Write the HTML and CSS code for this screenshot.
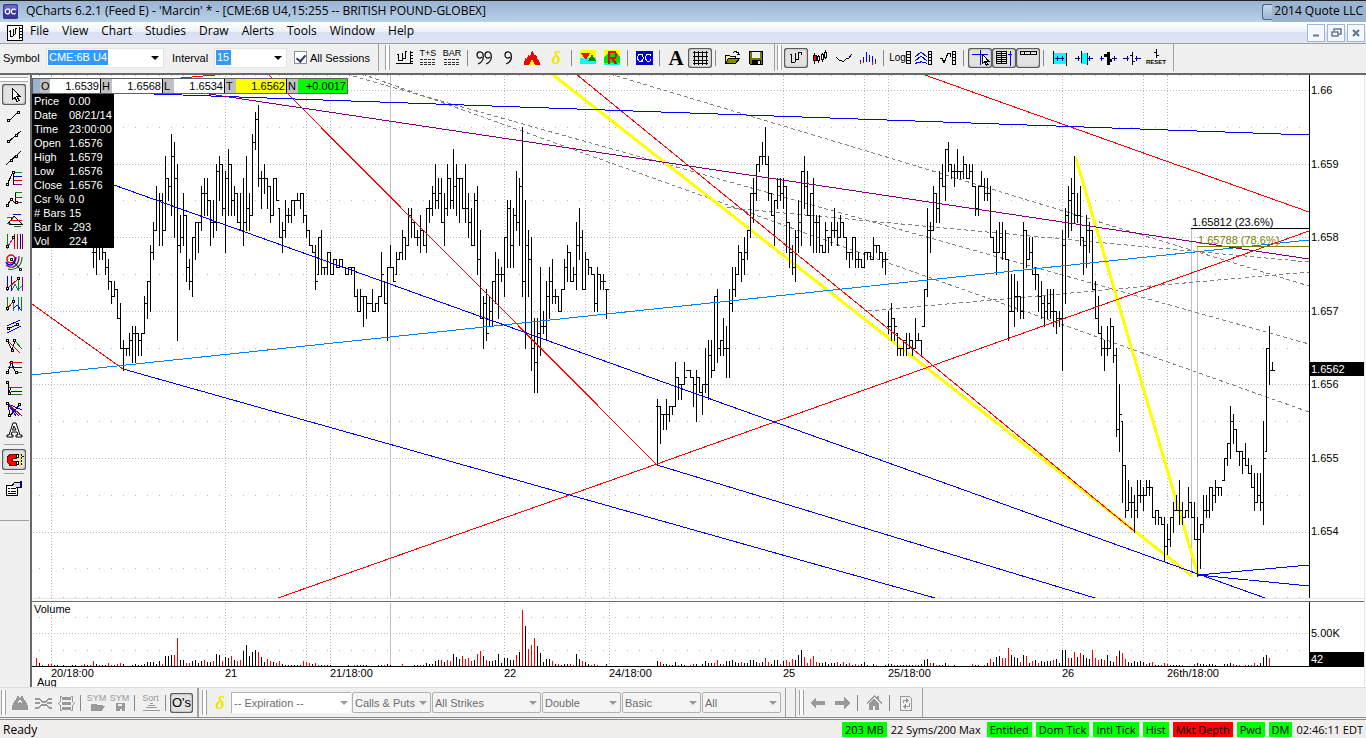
FILE: index.html
```html
<!DOCTYPE html>
<html lang="en">
<head>
<meta charset="utf-8">
<title>QCharts 6.2.1</title>
<link rel="stylesheet" href="styles.css">
</head>
<body>
<header class="titlebar">
  <svg class="applogo" viewBox="0 0 16 16"><rect width="16" height="16" rx="2" fill="#3a3597"/><rect x="1" y="1" width="14" height="6" rx="2" fill="#6a64c4"/><path d="M7 10.5L6 9.500M6.500 5.500H4L2.500 7v2L4 10.500h2l1-1.500V7zM13.500 6.500l-1-1H10.500L9 7v2l1.500 1.500h2l1-1" fill="none" stroke="#fff" stroke-width="1.400"/></svg>
  <h1>QCharts 6.2.1 (Feed E) - 'Marcin' * - [CME:6B U4,15:255 -- BRITISH POUND-GLOBEX]</h1>
  <span class="capbtn"></span>
  <span class="owner">2014 Quote LLC</span>
</header>

<nav class="menubar">
  <svg class="docicon" viewBox="0 0 16 16" shape-rendering="crispEdges"><rect x=".5" y=".5" width="15" height="15" fill="#fff" stroke="#000"/><path d="M3.500 5v7M2 6.500h1M4 11.500h2M6.500 4v7M7 9.500h1M8.500 3v6M9 3.500h1M12.500 2v12M13 3.500h2M13 6.500h2M13 9.500h2M13 12.500h2" stroke="#000" fill="none"/></svg>
  <button>File</button><button>View</button><button>Chart</button><button>Studies</button><button>Draw</button><button>Alerts</button><button>Tools</button><button>Window</button><button>Help</button>
  <span class="wbtns">
    <button aria-label="Minimize"><svg viewBox="0 0 12 12"><path d="M3 8.500h6" stroke="#647a91" stroke-width="2"/></svg></button>
    <button aria-label="Restore"><svg viewBox="0 0 12 12"><path d="M4 4V2h7v5H9M2 5h6v4H2z" fill="none" stroke="#647a91" stroke-width="1.500"/></svg></button>
    <button aria-label="Close"><svg viewBox="0 0 12 12"><path d="M3 3l6 6M9 3l-6 6" stroke="#647a91" stroke-width="2.200"/></svg></button>
  </span>
</nav>

<div class="toolbar top">
  <form class="fields">
    <label class="lsym" for="sym">Symbol</label>
    <span class="combo csym"><input id="sym" value="CME:6B U4"><button type="button" aria-label="Symbols"></button></span>
    <label class="lint" for="int">Interval</label>
    <span class="combo cint"><input id="int" value="15"><button type="button" aria-label="Intervals"></button></span>
    <label class="sess"><input type="checkbox" checked>All Sessions</label>
  </form>
  <div class="group g1">
    <i class="grip"></i>
    <button class="tb" aria-label="Chart"><svg viewBox="0 0 24 20"><path d="M6.500 6v7M5 6.500h1M7 12.500h3M10.500 5v8M11 10.500h2M13.500 3v8M14 3.500h1M18.500 3v13M19 4.500h2M19 7.500h2M19 10.500h2M19 13.500h2M4 15.500h17" stroke="#000"/></svg></button>
    <button class="tb lab" aria-label="Time and sales"><b>T+S</b><svg viewBox="0 0 24 8"><path d="M4 1.500h16M4 4.500h16M4 6.500h16" stroke="#333" stroke-dasharray="3 1"/></svg></button>
    <button class="tb lab" aria-label="Bar"><b>BAR</b><svg viewBox="0 0 24 8"><path d="M4 1.500h16M4 4.500h16M4 6.500h16" stroke="#333" stroke-dasharray="3 1"/></svg></button>
    <i class="sep"></i>
    <button class="tb" aria-label="Quotes"><svg class="soft" viewBox="0 0 24 20"><path d="M6 16c5-2 6-6 5-10-1-3-6-3-6 1 0 3 3 4 5 2M14 16c5-2 6-6 5-10-1-3-6-3-6 1 0 3 3 4 5 2" stroke="#111" stroke-width="1.300"/></svg></button>
    <button class="tb" aria-label="Quote"><svg class="soft" viewBox="0 0 24 20"><path d="M10 16c5-2 6-6 5-10-1-3-6-3-6 1 0 3 3 4 5 2" stroke="#111" stroke-width="1.300"/></svg></button>
    <button class="tb" aria-label="Hot list"><svg viewBox="0 0 24 20"><path d="M4 17l1-7 2 2 1-6 2 3 2-7 3 6 1-2 2 6 1-1 1 6z" fill="#e00"/><path d="M9 17l3-6 3 6z" fill="#ff0"/></svg></button>
    <button class="tb delta" aria-label="Options">δ</button>
    <i class="sep"></i>
    <button class="tb" aria-label="Movers"><svg viewBox="0 0 24 20"><path d="M4 2h16v8H4z" fill="#ff0"/><path d="M4 10h16v6H4z" fill="#0ff"/><path d="M5 5h9l-4 7z" fill="#f00"/><path d="M12 13l4-7 4 7z" fill="#080"/></svg></button>
    <button class="tb" aria-label="Ranking"><svg viewBox="0 0 24 20"><path d="M4 2h16v9H4z" fill="#ff0"/><path d="M4 13h16v4H4z" fill="#0ff"/><path d="M4 9l4-4h9l3 4v6H4z" fill="#0d0"/><path d="M8.500 16V4h5.500q2 0 2 3t-2 3H9M12 10l4 6" stroke="#e00" stroke-width="2"/></svg></button>
    <i class="sep"></i>
    <button class="tb" aria-label="QC"><svg viewBox="0 0 24 20"><path d="M4 3h17v14H4z" fill="#00c"/><path d="M9.500 12.500l2 2M10 6.500H7L5.500 9v2L7 13h3l1-2V9zM19 8l-1-1.500h-3L13.500 9v2l1.500 2h3l1-1.500" stroke="#fff"/></svg></button>
    <i class="sep"></i>
    <button class="tb serif" aria-label="Font">A</button>
    <button class="tb on" aria-label="Grid"><svg viewBox="0 0 24 20"><path d="M6.500 3v14M10.500 3v14M14.500 3v14M18.500 3v14M5 4.500h15M5 8.500h15M5 12.500h15M5 15.500h15" stroke="#000"/></svg></button>
    <i class="sep"></i>
    <button class="tb" aria-label="Open"><svg viewBox="0 0 24 20"><path d="M5.500 15.500v-8h4l1 1h5v2" fill="#ff8" stroke="#000"/><path d="M5.500 15.500l3-5h11l-4 5z" fill="#880" stroke="#000"/><path d="M13 4.500l2-1 3 1 1 2M17 6.500h3" stroke="#000"/></svg></button>
    <button class="tb" aria-label="Save"><svg viewBox="0 0 24 20"><path d="M5.500 3.500h13v13h-12l-1-1z" fill="#770" stroke="#000"/><path d="M8 4h8v6H8z" fill="#eee"/><path d="M8 12h9v5H8z" fill="#000"/><path d="M14 13h2v3h-2z" fill="#eee"/></svg></button>
  </div>
  <div class="group g2">
    <i class="grip"></i>
    <button class="tb on" aria-label="Bars"><svg viewBox="0 0 24 20"><path d="M7.500 6v9M6 6.500h1M8 14.500h3M11.500 5v9M12 11.500h2M14.500 4v8M15 4.500h2v2" stroke="#000"/></svg></button>
    <button class="tb" aria-label="Candles"><svg viewBox="0 0 24 20"><path d="M6.500 5v11M10.500 7v8M14.500 5v9M17.500 2v9" stroke="#000"/><path d="M5 7h3v5H5z" fill="#f00" stroke="#000"/><path d="M9.500 8.500h2v4h-2zM13.500 6.500h2v5h-2zM16.500 4.500h2v5h-2z" fill="#fff" stroke="#000"/></svg></button>
    <button class="tb" aria-label="Line"><svg viewBox="0 0 24 20"><path d="M4 9l3 3h2l2 2 4-4h2l3-4" stroke="#000"/></svg></button>
    <button class="tb" aria-label="Histogram"><svg viewBox="0 0 24 20"><path d="M4.500 12v2M7.500 9v5M10.500 4v10M13.500 7v7M16.500 8v6M19.500 11v3" stroke="#00f"/><path d="M4.500 14v2M7.500 14v1M16.500 14v3M19.500 14v2" stroke="#f00"/></svg></button>
    <i class="sep"></i>
    <button class="tb log" aria-label="Log scale">Log<svg viewBox="0 0 5 14"><path d="M.5.5h4v12h-4zM1 3.500h3M1 6.500h3M1 9.500h3" stroke="#000"/></svg></button>
    <button class="tb" aria-label="Overlay scale"><svg viewBox="0 0 24 20"><path d="M3 9l6-5 6 5M3 13l6-5 6 5M3 16l3-2 2 1 1-2 2 2 2-1 2 2" stroke="#00f"/><path d="M16.500 3.500h3v13h-3zM17 6.500h2M17 9.500h2M17 12.500h2" stroke="#000"/></svg></button>
    <button class="tb" aria-label="Study scale"><svg viewBox="0 0 24 20"><path d="M4 11l2-1 2 5 4-10h2l1 4M16.500 3.500h3v13h-3zM17 6.500h2M17 9.500h2M17 12.500h2" stroke="#000"/></svg></button>
    <i class="sep"></i>
    <button class="tb on" aria-label="Crosshair"><svg viewBox="0 0 24 20"><path d="M4 6.500h16M12.500 2v15" stroke="#00f"/><path d="M14.500 6.500v9l2-2 2 4 1.500-1-2-3h3z" fill="#fff" stroke="#000"/></svg></button>
    <button class="tb on" aria-label="Data window"><svg viewBox="0 0 24 20"><path d="M4.500 3.500h10v12h-10zM5 5.500h9M5 7.500h9M5 9.500h9M5 11.500h9M5 13.500h9M9.500 4v11" stroke="#000"/><path d="M16 6.500h4M18.500 3v15" stroke="#00f"/></svg></button>
    <button class="tb on" aria-label="Quote bar"><svg viewBox="0 0 24 20"><path d="M4.500 3.500h16v3h-16zM8.500 4v3M14.500 4v3" stroke="#000"/></svg></button>
    <i class="sep"></i>
    <button class="tb" aria-label="Fit"><svg viewBox="0 0 24 20"><path d="M5 5h13v11H5z" fill="#0ff"/><path d="M5.500 3v13M18.500 5v13" stroke="#000"/><path d="M7 10.500h9M9.500 8v5M14.500 8v5" stroke="#009"/></svg></button>
    <button class="tb" aria-label="Squeeze"><svg viewBox="0 0 24 20"><path d="M9 5h6v11H9z" fill="#0ff"/><path d="M9.500 3v12M15.500 5v12" stroke="#000"/><path d="M3 10.500h5M6.500 8v5M16 10.500h5M17.500 8v5" stroke="#009"/></svg></button>
    <button class="tb" aria-label="Widen"><svg viewBox="0 0 24 20"><path d="M12 4v13M8 7h4M12 12h4" stroke="#000" stroke-width="3"/><path d="M4 10.500h4M5.500 8v5M16 10.500h5M18.500 8v5" stroke="#009"/></svg></button>
    <button class="tb" aria-label="Narrow"><svg viewBox="0 0 24 20"><path d="M12.500 4v13M10 7.500h2M13 13.500h2" stroke="#000"/><path d="M3 10.500h6M7.500 8v5M15 10.500h6M16.500 8v5" stroke="#009"/></svg></button>
    <button class="tb reset" aria-label="Reset"><svg viewBox="0 0 24 9"><path d="M12.500 0v9M10 3.500h2M13 6.500h2" stroke="#000"/></svg><b>RESET</b></button>
  </div>
</div>

<main class="work">
  <aside class="tools">
    <i class="hgrip"></i>
    <button class="on" aria-label="Pointer"><svg viewBox="0 0 20 20"><path d="M8.500 3.500v11l2.500-2 2 4 2-1-2-4h3z" fill="#fff" stroke="#000"/></svg></button>
    <button aria-label="Segment"><svg viewBox="0 0 20 20"><path d="M5 15l9-9" stroke="#000"/><path class="h" d="M3.500 13.500h2v2h-2zM13.500 5.500h2v2h-2z"/></svg></button>
    <button aria-label="Ray"><svg viewBox="0 0 20 20"><path d="M4 15L17 4" stroke="#000"/><path class="h" d="M3.500 13.500h2v2h-2zM11.500 7.500h2v2h-2z"/></svg></button>
    <button aria-label="Line"><svg viewBox="0 0 20 20"><path d="M2 17L17 3" stroke="#000"/><path class="h" d="M6.500 11.500h2v2h-2zM11.500 7.500h2v2h-2z"/></svg></button>
    <button aria-label="Retracement"><svg viewBox="0 0 20 20"><path d="M3 16L9 3v13" stroke="#000"/><path d="M10 3.500h8" stroke="#080"/><path d="M10 7.500h8" stroke="#00c"/><path d="M10 11.500h8" stroke="#c00"/><path d="M10 15.500h8" stroke="#808"/><path class="h" d="M2.500 14.500h2v2h-2zM8.500 2.500h2v2h-2z"/></svg></button>
    <button aria-label="Extension"><svg viewBox="0 0 20 20"><path d="M3 16l4-7 4 4V2" stroke="#000"/><path d="M11 2.500h7" stroke="#080"/><path d="M11 7.500h7" stroke="#c00"/><path d="M11 12.500h7" stroke="#808"/><path class="h" d="M2.500 14.500h2v2h-2zM6.500 8.500h2v2h-2zM11.500 11.500h2v2h-2z"/></svg></button>
    <button aria-label="Projection"><svg viewBox="0 0 20 20"><path d="M4 13l6-8 8 8H5" stroke="#000"/><path d="M9 3.500h8" stroke="#00c"/><path d="M3 6.500h7" stroke="#c0c"/><path d="M6 9.500h12" stroke="#c00"/><path d="M10 15.500h7M3 12.500h4" stroke="#080"/></svg></button>
    <button aria-label="Time zones"><svg viewBox="0 0 20 20"><path d="M3.500 2v15" stroke="#080"/><path d="M10.500 2v15M13.500 2v15" stroke="#c00"/><path d="M16.500 2v15" stroke="#00c"/><path d="M18.500 2v15" stroke="#900"/><path d="M4 14l6-9" stroke="#c0c"/><path class="h" d="M2.500 13.500h2v2h-2zM8.500 4.500h2v2h-2z"/></svg></button>
    <button aria-label="Arcs"><svg class="soft" viewBox="0 0 20 20"><circle cx="7" cy="6" r="4" stroke="#e00" stroke-width="1.500"/><path d="M2 9c3 5 9 4 10-5" stroke="#00f" stroke-width="1.500"/><path d="M2 12c6 5 13 1 13-9" stroke="#808" stroke-width="1.200"/><path d="M4 16c7 2 14-3 14-12" stroke="#080" stroke-width="1.200"/><path d="M7 6l9 10" stroke="#000"/><path class="h" d="M6.500 5.500h2v2h-2zM15.500 15.500h2v2h-2z"/></svg></button>
    <button aria-label="Cycles"><svg viewBox="0 0 20 20"><path d="M3.500 2v15M7.500 2v15" stroke="#00c"/><path d="M14.500 3v14" stroke="#080"/><path d="M18.500 3v14" stroke="#808"/><path d="M3 15L15 4" stroke="#e00"/><path d="M8 16l3-6 3 6 4-4" stroke="#088"/><path class="h" d="M2.500 13.500h2v2h-2zM13.500 3.500h2v2h-2z"/></svg></button>
    <button aria-label="Periods"><svg viewBox="0 0 20 20"><path d="M3.500 2v14M17.500 2v14" stroke="#080"/><path d="M9.500 2v14M14.500 2v14" stroke="#088"/><path d="M3 14l6-7" stroke="#e00"/><path d="M9 14l4-4 4 5" stroke="#00c"/><path class="h" d="M2.500 12.500h2v2h-2zM8.500 5.500h2v2h-2z"/></svg></button>
    <button aria-label="Channel"><svg viewBox="0 0 20 20"><path d="M3 10l13-6M3 17l14-7" stroke="#00f"/><path d="M3 13l12-5" stroke="#000"/><path class="h" d="M3.500 11.500h2v2h-2zM12.500 7.500h2v2h-2z"/></svg></button>
    <button aria-label="Pitchfork"><svg viewBox="0 0 20 20"><path d="M3 3l5 10 3-9" stroke="#000"/><path d="M11 4l7 8" stroke="#080"/><path d="M4 4l12 12" stroke="#e00"/><path class="h" d="M2.500 2.500h2v2h-2zM9.500 2.500h2v2h-2zM7.500 12.500h2v2h-2z"/></svg></button>
    <button aria-label="Levels"><svg viewBox="0 0 20 20"><path d="M4 15l3-11 5 11" stroke="#000"/><path d="M5 4.500h13" stroke="#e00"/><path d="M4 9.500h14" stroke="#00f"/><path d="M12 14.500h6" stroke="#080"/><path class="h" d="M2.500 13.500h2v2h-2zM6.500 3.500h2v2h-2zM11.500 13.500h2v2h-2z"/></svg></button>
    <button aria-label="Targets"><svg viewBox="0 0 20 20"><path d="M4 3v13l3-8" stroke="#000"/><path d="M5 8.500h13" stroke="#e00"/><path d="M7 12.500h11" stroke="#00f"/><path d="M6 15.500h12" stroke="#080"/><path class="h" d="M2.500 2.500h2v2h-2zM4.500 13.500h2v2h-2z"/></svg></button>
    <button aria-label="Fan"><svg viewBox="0 0 20 20"><path d="M4 4l2 12L16 4" stroke="#000"/><path d="M4 4l14 6M4 4l11 12M4 4l8 12" stroke="#00f"/><path d="M4 4l14 12" stroke="#e00"/><path class="h" d="M2.500 2.500h2v2h-2zM14.500 3.500h2v2h-2zM4.500 14.500h2v2h-2z"/></svg></button>
    <button aria-label="Text"><svg class="soft" viewBox="0 0 20 20"><path d="M9 2h3l4 12h2v2h-6v-2h2l-1-3H8l-1 3h2v2H3v-2h2zM10 5l2 4H8.500z" fill="#fff" stroke="#000"/></svg></button>
    <i class="hsep"></i>
    <button class="on" aria-label="Magnet"><svg viewBox="0 0 20 20"><path d="M12 4.500H6L3.500 7v5L6 15.500h6v-4H8v-3h4z" fill="#f00" stroke="#700"/><path d="M12.500 4.500h2v3h-2zM12.500 11.500h2v3h-2z" fill="#fff" stroke="#000"/><path d="M16.500 3v13" stroke="#fd0"/><path d="M17.500 4v12M18 6.500h2" stroke="#000" stroke-dasharray="2 1"/></svg></button>
    <i class="hsep"></i>
    <button aria-label="Properties"><svg viewBox="0 0 20 20"><path d="M2.500 6.500h11v10h-11zM4 9.500h2M7 9.500h5M4 12.500h2M7 12.500h5M4 14.500h8" fill="#fff" stroke="#000"/><path d="M8 7l3-4h5v5h-4" fill="#ddd" stroke="#000"/><path d="M16 2h2v7h-2z" fill="#008"/></svg></button>
    <i class="hend"></i>
  </aside>

  <section class="chart">
    <svg id="plot" viewBox="32 75 1334 612" role="img" aria-label="British Pound 15 minute chart">
      <g id="grid" class="c"></g>
      <g class="c lines">
        <path class="grey" d="M390.500 75V598M390.500 603V666M1191.500 229V575M1197.500 247V575"/>
        <path class="dash" d="M610 74L880 155L1309 286M346 74L480 112L880 224L1309 344M362 74L480 116L703 196L880 260L1309 412M720 207L880 222L1309 262M868 311L1309 272"/>
        <path class="yellow" d="M552 74L1192 576M1075.500 157L1198 575"/>
        <g id="bars"></g>
        <path class="red" d="M32 304L123 369M181 78L226 74M268 74L657 465M278 598L657 464L1309 231M576 74L880 322L1134 531M922 74L1309 212"/>
        <path class="azure" d="M32 375L880 285L1309 240"/>
        <path class="blue" d="M123 369L935 598M657 465L1095 598M114 185L1265 598M154 94L1309 135M1198 575L1309 565M1198 575L1309 586"/>
        <path class="purple" d="M209 94L1309 259"/>
        <path class="black" d="M1191 228.500H1309"/>
        <path class="olive" d="M1197 246.500H1309"/>
      </g>
      <g class="c">
        <path class="axis" d="M1309.500 75V598M1309.500 602V666.500M32 666.500H1309"/>
        <path class="split" d="M32 601.500H1364"/>
        <path class="edge" d="M32 598.500H1364M1364.500 75V687"/>
        <path class="tag" d="M1310 362h54v14h-54zM1310 652h54v15h-54z"/>
      </g>
      <g id="vol" class="c"></g>
      <g class="txt">
        <text x="1192" y="226">1.65812 (23.6%)</text>
        <text x="1198" y="244" fill="#808000">1.65788 (78.6%)</text>
        <text x="1311" y="94">1.66</text><text x="1311" y="168">1.659</text><text x="1311" y="241">1.658</text><text x="1311" y="315">1.657</text><text x="1311" y="388">1.656</text><text x="1311" y="462">1.655</text><text x="1311" y="535">1.654</text>
        <text x="1311" y="373" fill="#fff">1.6562</text><text x="1311" y="663" fill="#fff">42</text><text x="1311" y="637">5.00K</text>
        <text x="34" y="613">Volume</text>
        <text x="51" y="677">20/18:00</text><text x="225" y="677">21</text><text x="330" y="677">21/18:00</text><text x="504" y="677">22</text><text x="609" y="677">24/18:00</text><text x="783" y="677">25</text><text x="888" y="677">25/18:00</text><text x="1062" y="677">26</text><text x="1167" y="677">26th/18:00</text>
        <text x="37" y="686">Aug</text>
      </g>
    </svg>
    <dl class="quote">
      <dt class="first">O</dt><dd>1.6539</dd><dt>H</dt><dd>1.6568</dd><dt>L</dt><dd>1.6534</dd><dt>T</dt><dd class="last">1.6562</dd><dt>N</dt><dd class="net">+0.0017</dd>
    </dl>
    <dl class="info">
      <dt>Price</dt><dd>0.00</dd><dt>Date</dt><dd>08/21/14</dd><dt>Time</dt><dd>23:00:00</dd><dt>Open</dt><dd>1.6576</dd><dt>High</dt><dd>1.6579</dd><dt>Low</dt><dd>1.6576</dd><dt>Close</dt><dd>1.6576</dd><dt>Csr %</dt><dd>0.0</dd><dt># Bars</dt><dd>15</dd><dt>Bar Ix</dt><dd>-293</dd><dt>Vol</dt><dd>224</dd>
    </dl>
  </section>
</main>

<div class="toolbar bottom">
  <div class="group b1">
    <i class="grip"></i>
    <button class="ib" aria-label="Watch"><svg viewBox="0 0 24 20"><path d="M4 17v-4l3-6h1l1-4h2l1 3 1-3h2l1 4h1l3 6v4z" fill="#999"/><path d="M10 10l2-3 2 3" stroke="#eee"/></svg></button>
    <button class="ib" aria-label="Unlink"><svg viewBox="0 0 24 20"><path d="M4 5.500h4l3 3h4l3-3h3M4 10h5M16 10h5M4 14.500h4l3-3h4l3 3h3" stroke="#999" stroke-width="2"/></svg></button>
    <button class="ib" aria-label="Link"><svg viewBox="0 0 24 20"><path d="M8 4h9v3H8zM8 9h9v3H8zM8 14h9v3H8z" fill="#999"/><path d="M8 3.500H6.500v5l-2 2 2 2v5H8M17 3.500h1.500v5l2 2-2 2v5H17" stroke="#999"/></svg></button>
    <i class="sep"></i>
    <button class="ib lab" aria-label="Open symbols"><b>SYM</b><svg viewBox="0 0 24 8"><path d="M6 1h5l1 1h6v1h2l-3 5H6z" fill="#999"/></svg></button>
    <button class="ib lab" aria-label="Save symbols"><b>SYM</b><svg viewBox="0 0 24 8"><path d="M8 0h9v8H8z" fill="#999"/><path d="M10 1h4v2h-4zM12 6h2v2h-2z" fill="#eee"/></svg></button>
    <i class="sep"></i>
    <button class="ib lab" aria-label="Sort"><b>Sort</b><svg viewBox="0 0 24 8"><path d="M11 .5h3M9 2.500h7M7 4.500h11M4 7.500h17" stroke="#999"/></svg></button>
    <i class="sep"></i>
    <button class="ib on os">O's</button>
  </div>
  <form class="group b2">
    <i class="grip"></i>
    <span class="delta">δ</span>
    <span class="sel exp"><select disabled aria-label="Expiration"><option>-- Expiration --</option></select></span>
    <span class="sel"><select disabled aria-label="Type"><option>Calls &amp; Puts</option></select></span>
    <span class="sel wide"><select disabled aria-label="Strikes"><option>All Strikes</option></select></span>
    <span class="sel"><select disabled aria-label="Columns"><option>Double</option></select></span>
    <span class="sel"><select disabled aria-label="Layout"><option>Basic</option></select></span>
    <span class="sel"><select disabled aria-label="Filter"><option>All</option></select></span>
  </form>
  <div class="group b3">
    <i class="grip"></i>
    <button class="tb" aria-label="Back"><svg viewBox="0 0 24 20"><path d="M4 10l6-6v4h9v4h-9v4z" fill="#999"/></svg></button>
    <button class="tb" aria-label="Forward"><svg viewBox="0 0 24 20"><path d="M20 10l-6-6v4H5v4h9v4z" fill="#999"/></svg></button>
    <i class="sep"></i>
    <button class="tb" aria-label="Home"><svg viewBox="0 0 24 20"><path d="M4 10l8-8 3 3V3h2v4l3 3-1 1-7-7-7 7z" fill="#999"/><path d="M7 10l5-4 5 4v7h-4v-4h-2v4H7z" fill="#999"/></svg></button>
    <i class="sep"></i>
    <button class="tb" aria-label="Refresh"><svg viewBox="0 0 24 20"><path d="M6.500 3.500h9l2 2v12h-11z" stroke="#999"/><path d="M9 10V7.500h5M12 5.500l2 2-2 2M15 10v3.500h-5M12 11.500l-2 2 2 2" stroke="#999"/></svg></button>
  </div>
</div>

<footer class="status">
  <span class="ready">Ready</span>
  <span class="ok">203 MB</span><span class="plain">22 Syms/200 Max</span><span class="ok">Entitled</span><span class="ok">Dom Tick</span><span class="ok">Intl Tick</span><span class="ok">Hist</span><span class="bad">Mkt Depth</span><span class="ok">Pwd</span><span class="ok">DM</span><span class="clock">02:46:11 EDT</span>
</footer>
<script src="chart.js"></script>
</body>
</html>
```
FILE: styles.css
```css
* { box-sizing: border-box; }
body { margin: 0; min-height: 100vh; display: flex; flex-direction: column; background: #f0f0f0; color: #000; font: 12px "Open Sans", "Noto Sans", sans-serif; }
button { border: 0; padding: 0; margin: 0; background: none; color: inherit; font: inherit; }
svg { display: block; fill: none; }

.titlebar { display: flex; align-items: center; height: 22px; padding-left: 3px; border-top: 1px solid #222; background: linear-gradient(#99b3d1, #b9d1ea); white-space: nowrap; overflow: hidden; }
.applogo { width: 15px; height: 15px; margin-right: 8px; }
.titlebar h1 { margin: 0; font: inherit; line-height: 18px; padding-bottom: 2px; flex: 1; }
.capbtn { width: 10px; height: 16px; border: 1px solid #4c6580; border-right: 0; border-radius: 3px 0 0 3px; background: linear-gradient(#c8d8ea, #9db7d4); }
.owner { height: 21px; line-height: 19px; padding: 0 3px 0 2px; background: #99b3d1; }

.menubar { display: flex; align-items: center; height: 22px; padding-left: 7px; border-bottom: 1px solid #a0a0a0; background: linear-gradient(#fff 0, #eef1fa 45%, #d9e0f2 50%, #e0e5f5); }
.docicon { width: 16px; height: 16px; margin-right: 1px; }
.menubar > button { padding: 0 6px; margin-right: 1px; height: 20px; line-height: 16px; padding-bottom: 3px; }
.wbtns { display: flex; gap: 2px; margin-left: auto; padding-right: 1px; }
.wbtns button { width: 18px; height: 18px; border: 1px solid #a8b8cc; background: #f4f7fc; display: grid; place-items: center; }
.wbtns svg { width: 12px; height: 12px; }

.toolbar { display: flex; background: #f0f0f0; font-family: "Liberation Sans", Arial, sans-serif; }
.toolbar.top { height: 31px; padding-bottom: 2px; border-bottom: 2px solid #696969; }
.fields { display: flex; align-items: center; width: 379px; padding-left: 3px; border-right: 1px solid #a0a0a0; font-size: 11px; margin: 0; }
.lsym { width: 43px; }
.lint { width: 42px; margin-left: 8px; }
.combo { display: flex; justify-content: space-between; height: 20px; padding: 1px; background: #fff; border: 1px solid #e3e3e3; }
.csym { width: 118px; }
.cint { width: 73px; }
.combo input { width: 60px; height: 15px; border: 0; padding: 0 1px; background: #39f; color: #fff; font: 11px "Liberation Sans", Arial, sans-serif; outline: 0; }
.cint input { width: 15px; }
.combo button { width: 15px; display: grid; place-items: center; }
.combo button::after, .sel::after { content: ""; border: 4px solid transparent; border-top-color: #000; border-bottom: 0; }
.sess { display: flex; align-items: center; gap: 3px; margin-left: 7px; font-size: 11px; white-space: nowrap; }
.sess input { appearance: none; width: 13px; height: 13px; margin: 0; border: 1px solid #8e8f8f; background: #fff; display: grid; place-items: center; }
.sess input:checked::after { content: ""; width: 4px; height: 7px; border: solid #31347c; border-width: 0 2px 2px 0; rotate: 40deg; }

.group { display: flex; align-items: center; margin: 0; border-right: 1px solid #a0a0a0; }
.g1 { padding: 0 4px 0 6px; width: 396px; }
.g2 { padding: 0 5px 0 2px; }
.grip { flex: none; width: 5px; height: 25px; margin-right: 2px; border: 1px solid #a0a0a0; border-width: 0 1px; background: #fff; }
.tb { flex: none; width: 24px; height: 20px; display: grid; place-items: center; }
.tb svg { width: 24px; height: 20px; }
.tools svg, .tb svg, .ib svg { shape-rendering: crispEdges; }
.tools .soft, .tb .soft { shape-rendering: auto; }
.tb.on, .ib.on, .tools .on { border-radius: 3px; background: #e3e3e3; box-shadow: inset 0 0 0 1px #5c5c5c, inset 0 0 2px 1px #888; }
.sep { flex: none; width: 8px; height: 16px; background: linear-gradient(#8a8a8a, #8a8a8a) 3px 0 / 1px 100% no-repeat; }
.tb.lab, .ib.lab, .tb.reset { display: flex; flex-direction: column; align-items: center; justify-content: center; }
.lab b { font: 9px/9px "Liberation Sans", Arial, sans-serif; }
.tb.lab svg, .ib.lab svg { width: 24px; height: 8px; }
.tb.reset svg { width: 24px; height: 9px; }
.reset b { font: bold 6px/8px "Liberation Sans", Arial, sans-serif; }
.delta { color: #f2e600; font: italic bold 18px/18px "Liberation Serif", serif; }
.tb.serif { font: bold 21px/20px "Liberation Serif", serif; }
.tb.log { display: flex; align-items: center; justify-content: center; font-size: 10px; }
.tb.log svg { width: 5px; height: 14px; }

.work { display: flex; background: #fff; }
.tools { flex: none; width: 32px; display: flex; flex-direction: column; align-items: center; padding: 2px 2px 0 0; border-right: 2px solid #696969; background: #f0f0f0; }
.hgrip { flex: none; width: 28px; height: 5px; margin-bottom: 2px; border: 1px solid #b0b0b0; border-width: 1px 0; background: #fff; }
.tools button { flex: none; width: 24px; height: 21px; display: grid; place-items: center; }
.tools svg { width: 20px; height: 20px; }
.tools .h { fill: #fff; stroke: #000; }
.hsep { flex: none; width: 20px; height: 8px; background: linear-gradient(#a0a0a0, #a0a0a0) 0 3px / 100% 1px no-repeat; }
.hend { width: 30px; margin-top: 21px; border-top: 1px solid #a0a0a0; }

.chart { position: relative; flex: 1; min-width: 0; }
#plot { width: 100%; height: auto; }
.c { shape-rendering: crispEdges; }
.tag { fill: #000; }
.edge { stroke: #e4e4e4; }
.grey { stroke: #c0c0c0; }
.dot { stroke: #b8b8b8; stroke-dasharray: 1 2; }
.sparse { stroke: #b8b8b8; stroke-dasharray: 1 11; }
.dash { stroke: #808080; stroke-dasharray: 4 3; }
.yellow { stroke: #ff0; stroke-width: 3; }
.red { stroke: #f00; }
.azure { stroke: #0080ff; }
.blue { stroke: #00f; }
.purple { stroke: #800080; }
.black, .axis { stroke: #000; }
.olive { stroke: #808000; }
.split { stroke: #696969; }
.txt { font: 11px "Liberation Sans", Arial, sans-serif; fill: #000; }

.quote { position: absolute; left: 0; top: 3px; display: flex; margin: 0; height: 16px; border: 1px solid #606060; font: 11px/14px "Liberation Sans", Arial, sans-serif; }
.quote dt { width: 11px; padding-left: 1px; background: #c0c0c0; }
.quote .first { width: 17px; border-left: 7px solid #99b4d1; }
.quote dd { width: 51px; margin: 0; padding-right: 1px; text-align: right; background: #fff; border-right: 1px solid #000; }
.quote .last { background: #ff0; }
.quote .net { width: 49px; background: #0f0; border: 0; }
.info { position: absolute; left: 0; top: 19px; display: grid; grid-template-columns: 35px 45px; width: 82px; margin: 0; padding-left: 2px; background: #000; color: #fff; font: 11px/14px "Liberation Sans", Arial, sans-serif; white-space: nowrap; }
.info dd { margin: 0; }

.toolbar.bottom { height: 31px; border-top: 1px solid #dcdcdc; border-bottom: 1px solid #8a8a8a; color: #777; }
.b1 { width: 198px; padding-left: 1px; }
.ib { flex: none; width: 23px; height: 20px; display: grid; place-items: center; color: #999; }
.ib svg { width: 24px; height: 20px; }
.b1 .ib.on { color: #000; font-size: 13px; height: 20px; }
.b2 { padding: 0 3px; border-left: 1px solid #a0a0a0; }
.b2 .delta { width: 22px; text-align: center; }
.b3 { margin-left: 9px; padding: 0 4px 0 3px; border-left: 1px solid #a0a0a0; }
.sel { position: relative; width: 79px; height: 21px; margin-right: 1px; border: 1px solid #adb2b5; border-radius: 2px; background: #f4f4f4; }
.sel.wide { width: 109px; }
.sel.exp { width: 120px; border-radius: 0; border-width: 1px 0 0 1px; background: #fff; }
.sel select { appearance: none; width: 100%; height: 19px; padding: 0 2px; border: 0; background: none; color: #6d6d6d; opacity: 1; font: 11px "Liberation Sans", Arial, sans-serif; }
.sel::after { position: absolute; right: 3px; top: 8px; border-top-color: #999; }

.status { flex: 1; display: flex; align-items: flex-start; gap: 4px; min-height: 18px; margin-top: 1px; padding: 2px 3px 0; border-top: 1px solid #8a8a8a; background: #f0eded; line-height: 15px; white-space: nowrap; font-size: 11px; }
.ready { margin-right: auto; font-size: 12px; }
.ok, .bad { padding: 0 3px; background: #0f0; }
.bad { background: #f00; }
.plain { margin-right: 2px; }
```
FILE: chart.js
```js
// Bars are high,low,close in ticks of 0.0001 below 1.6600; a run begins with its x.
const runs = [
  "93 18,24,22 18,25,20 18,23,21 18,23,22 22,25,24 23,27,26 26,29,28 26,28,27 27,31,31 29,35,35 34,38,35 35,36,35 33,36,34 32,37,33 32,37,33 33,36,34 33,36,33 28,33,29 26,31,26 21,30,22 18,23,19 13,19,15 14,21,15 14,21,19 9,19,12 12,15,13 6,17,9 7,20,12 10,34,21 17,22,20 14,21,17 17,26,24 23,27,26 20,28,20 18,23,18 18,22,18 13,19,14 12,17,14 12,17,15 15,21,18 15,20,18 10,19,11 9,15,10 10,17,16 11,22,12 8,17,10 10,17,15 13,17,14 14,18,18 14,19,19 12,21,18 9,19,16 14,19,17 6,17,7 3,8,4 2,13,12 11,16,12 10,14,12 12,16,13 13,18,17 12,17,12 12,15,15 16,20,20 18,22,19 15,20,17 16,18,17 15,18,15 15,17,15 14,15,15 14,16,14 14,18,17 17,20,19 19,21,21 21,22,22 21,27,26 20,25,20 19,25,24 24,25,24 22,25,22 22,25,25 23,25,23 23,24,24 23,24,23 23,24,24 24,25,25 24,25,24 24,25,24 24,28,28 27,30,30 27,30,28 28,32,28 28,31,29 29,29,29 27,30,30 29,30,29 28,30,28 22,28,25 26,29,29 24,34,24 21,24,24 24,26,26 22,25,23 22,23,22 19,23,20 20,23,21 16,21,17 16,20,18 18,20,20 19,21,20 17,22,19 19,21,21 16,22,16 15,18,16 13,17,14 10,16,15 12,16,14 12,18,18 14,21,16 10,17,12 12,16,15 8,16,13 10,17,12 12,18,12 12,16,16 10,18,16 14,20,18 16,21,21 14,21,15 13,25,23 19,31,31 28,35,29 27,34,33 28,32,30 26,32,26 22,29,25 23,31,25 24,26,25 20,28,20 15,24,16 15,24,21 16,24,17 11,19,18 12,21,13 5,28,26 15,35,21 19,28,23 20,38,35 31,41,37 31,41,33 24,36,32 30,33,32 26,34,28 24,31,26 23,29,28 27,29,28 28,30,30 27,30,27 23,27,24 21,26,22 22,26,26 24,26,25 18,27,21 16,23,20 19,27,27 22,27,23 23,25,24 24,25,25 25,30,29 24,30,25 25,27,26 25,27,26 27,31,27",
  "657 42,51,43 43,48,44 44,46,44 42,46,44 43,45,43 43,44,43 37,43,39 39,42,40 40,42,40 37,40,39 38,38,38 38,39,39 39,43,40 38,45,39 39,41,41 40,44,40 35,41,40 34,42,36 34,39,38 28,38,28 27,37,35 34,36,34 31,36,35 32,39,35 27,39,29 24,30,27 24,28,25 21,25,22 22,26,23 20,25,22 19,23,19 14,20,14 12,18,14 10,15,10 9,11,9 7,10,9 5,10,10 9,15,14 14,17,17 15,21,15 12,16,13 12,15,14 12,16,13 13,22,18 18,24,22 21,25,24 19,26,20 15,22,18 11,21,11 9,16,13 11,17,17 14,21,14 12,22,18 17,22,18 17,22,21 21,22,22 18,22,19 20,22,20 18,21,19 16,20,19 18,21,20 17,20,18 18,20,20 20,23,22 22,24,22 20,23,20 20,24,23 22,24,23 23,24,24 22,24,22 22,23,22 22,23,23 20,23,21 21,22,21 21,23,22 22,24,23 22,25,23",
  "888 30,33,32 29,34,31 31,34,32 33,36,35 35,36,35 34,36,34 33,36,35 33,35,34 34,36,35 31,35,34 33,34,34 34,36,32 27,32,27 16,28,19 18,22,19 13,19,14 14,18,16 11,18,12 10,13,13 8,15,8 7,11,10 10,12,11 10,13,11 8,12,11 11,12,11 9,12,10 10,12,12 10,12,11 10,13,13 13,17,16 13,17,13 11,13,13 12,15,14 12,15,14 13,20,20 20,22,22 19,25,22 18,22,20 18,23,22 19,23,23 23,34,30 25,30,30 25,32,28 26,30,28 28,31,30 18,31,19 19,24,23 20,23,22 20,25,25 24,27,25 25,30,28 26,31,29 28,32,30 27,31,29 27,31,30 27,32,30 30,33,31 30,32,31 19,38,21 16,29,17 13,20,15 12,19,14 9,18,17 14,18,17 13,21,20 20,25,21 17,24,19 18,22,19 19,27,27 26,31,31 28,33,33 32,36,35 34,38,35 32,36,35 31,35,32 32,37,36 35,47,46 40,49,44 45,56,51 51,58,57 53,57,56 54,58,56 55,60,57 53,58,55 53,56,55 54,57,55 53,55,54 53,55,54 54,58,58 57,59,57 57,59,58 58,59,59 58,64,62 59,63,61 58,62,58 56,60,57 55,57,57 53,59,57 56,59,58 57,58,57 54,58,56 56,58,58 56,61,61 58,66,61 59,65,59 55,60,57 55,58,57 54,58,54 54,57,55 53,56,54 54,55,54 54,55,53 50,53,50 48,51,48 43,50,45 44,48,46 46,49,49 49,51,49 49,52,50 48,51,51 50,52,52 51,54,54 52,57,56 52,56,55 52,57,56 45,59,50 35,49,35 32,40,38 37,38,38"
];

// Volume bar heights; a minus marks a down bar.
const volumes = [
  "36 -8 3 -1 0 -2 -2 1 1 0 1 0 0 1 1 0 -1 -2 1 -1 -5 2 -1 1 1 -3 -1 1 -2 -3 2 0 0 1 2 1 1 2 4 4 4 2 5 -2 10 10 11 -11 -28 6 6 -3 -3 5 6 3 5 -6 4 4 -5 12 11 -5 9 8 -10 6 -5 -6 15 21 10 14 16 -14 9 4 -7 -5 4 -3 -5 2 1 1 1 1 1 1 -5 -4 -3 2 -3 -1 1 -1 1 1",
  "348 1 0 -1 1 1 1 1 0 0 0 1 1 -1 2 1 0 0 0 -2 0 0 0 1 1 -1 1 3 2 2 5 6 -6 4 -6 -5 12 9 7 -10 -7 -8 -5 6 -12 -15 10 -6 5 5 6 12 3 8 8 6 6 -11 14 -56 40 -17 -21 -28 20 13 4 7 7 -5 2 -2 1 2 2 -2 -1 12 7 -5 4 2 -1 -2 -1 0 0 2",
  "657 5 -4 2 2 1 1 4 -1 2 1 0 -1 -2 2 0 2 5 3 3 -3 -6 2 -2 5 5 6 4 3 -4 3 3 6 6 4 -3 4 -8 -4 2 6 6 -2 5 -6 -4 -7 6 11 16 -9 -3 -7 -10 -4 3 3 4 2 3 3 -4 2 -4 2 -3 1 -2 -1 2 4 1 0 2 -1 0 0 1 2 2 -1 1 1 1 1 1 1 -1 1 2 6 7 -3 3 -1 1 1 3 -1 0 1",
  "972 -2 1 1 0 -1 3 -7 4 9 10 -8 -8 -18 11 9 8 -4 11 -10 3 -5 6 -3 5 4 5 5 -6 7 3 16 16 -8 8 -14 9 -13 11 8 7 -16 -8 -6 7 -6 11 5 4 -10 15 -13 -7 4 3 5 4 5 4 -2 3 -4 1 1 -1 -3 -2 1 1 1 1 -1 0 0 0 -2 3 2 2 1 2 2 1 0 0 2 2 3 -2 1 -1 0 -1 1 -1 -3 1 3 9 11 -8"
];

const el = id => document.getElementById(id);
const path = (cls, d) => `<path class="${cls}" d="${d}"/>`;
const level = n => Math.round(90 + n * 7.36) + 0.5;

let grid = "";
for (let n = 0; n <= 60; n += 10) grid += path("dot", `M33 ${level(n)}H1309`);
for (let n = 5; n <= 65; n += 10) grid += path("sparse", `M39 ${level(n)}H1309`);
for (const y of [75.5, 597.5, 617.5, 650.5]) grid += path("sparse", `M39 ${y}H1309`);
grid += path("dot", "M33 633.5H1309");
for (const x of [51, 225, 306, 330, 504, 585, 609, 783, 864, 888, 1062, 1143, 1167])
  grid += path("dot", `M${x + 0.5} 76V598M${x + 0.5} 603V666`);
el("grid").innerHTML = grid;

let d = "";
for (const run of runs) {
  const parts = run.split(" ");
  let x = +parts.shift(), prev = null;
  for (const p of parts) {
    const [h, l, c] = p.split(",").map(Number);
    const open = Math.min(l, Math.max(h, prev === null ? c : prev));
    d += `M${x + 0.5} ${level(h) - 0.5}V${level(l) + 0.5}M${x - 1} ${level(open)}h1M${x + 1} ${level(c)}h2`;
    prev = c;
    x += 3;
  }
}
el("bars").innerHTML = path("black", d);

let up = "", down = "";
for (const run of volumes) {
  const parts = run.split(" ").map(Number);
  let x = parts.shift();
  for (const v of parts) {
    if (v > 0) up += `M${x + 0.5} 666v${-v}`;
    if (v < 0) down += `M${x + 0.5} 666v${v}`;
    x += 3;
  }
}
el("vol").innerHTML = path("black", up) + path("red", down);
```
